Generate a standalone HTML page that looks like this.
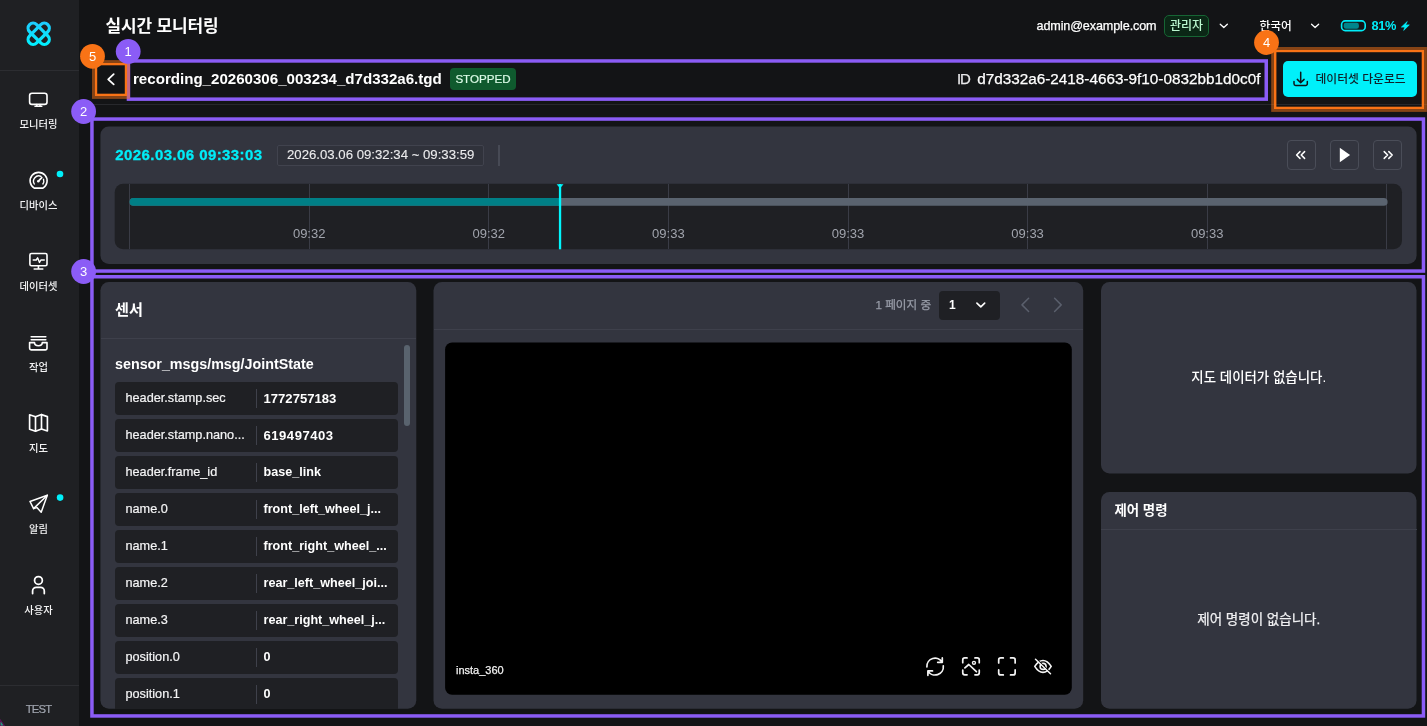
<!DOCTYPE html>
<html lang="ko">
<head>
<meta charset="utf-8">
<title>실시간 모니터링</title>
<style>
*{box-sizing:border-box;margin:0;padding:0}
html,body{width:1427px;height:726px;overflow:hidden;background:#131416}
body{position:relative;font-family:"Liberation Sans","Noto Sans CJK KR",sans-serif;color:#fff;-webkit-font-smoothing:antialiased}
.a{position:absolute}
.t{position:absolute;white-space:nowrap;line-height:20px;height:20px;-webkit-text-stroke:.25px}
.b{font-weight:700;-webkit-text-stroke:0}
svg{position:absolute;overflow:visible}
/* sidebar */
#side{left:0;top:0;width:79px;height:726px;background:#1f2023}
.sl{position:absolute;left:0;width:77px;text-align:center;font-size:10.3px;font-weight:500;line-height:14px;height:14px;margin-top:1.1px;color:#f2f2f3;white-space:nowrap}
.hr{position:absolute;height:1px;background:#3e404b}
.row{position:absolute;left:115px;width:283px;height:33px;background:#1f2024;border-radius:4px}
.row .k{position:absolute;left:10.5px;top:0;height:33px;line-height:33px;font-size:12.7px;color:#f4f4f5;white-space:nowrap;-webkit-text-stroke:.2px}
.row .v{position:absolute;left:148.5px;top:0;height:33px;line-height:33px;font-size:12.6px;font-weight:700;color:#fff;white-space:nowrap}
.row .n{font-size:13.1px}
.row i{position:absolute;left:141px;top:7px;width:1px;height:19px;background:#3f414b}
.tick{position:absolute;top:184px;width:1px;height:65px;background:#3a3c46}
.tl{position:absolute;top:224px;width:60px;margin-left:-30px;text-align:center;font-size:13px;line-height:20px;color:#a1a4ad}
.pbtn{position:absolute;top:140px;width:29px;height:30px;border:1px solid #4a4d58;border-radius:4px}
</style>
</head>
<body>
<div id="wrap" style="position:absolute;left:0;top:0;width:1427px;height:726px;will-change:transform">

<!-- ============ SIDEBAR ============ -->
<div id="side" class="a">
  <div class="a" style="left:0;top:70px;width:79px;height:1px;background:#2c2d31"></div>
  <div class="a" style="left:0;top:685px;width:79px;height:1px;background:#2c2d31"></div>
  <div class="sl" style="top:116.5px">모니터링</div>
  <div class="sl" style="top:197.5px">디바이스</div>
  <div class="sl" style="top:278.5px">데이터셋</div>
  <div class="sl" style="top:359.5px">작업</div>
  <div class="sl" style="top:440.5px">지도</div>
  <div class="sl" style="top:521.5px">알림</div>
  <div class="sl" style="top:602.5px">사용자</div>
  <div class="sl" style="top:701.2px;color:#a0a5af;font-size:11.3px;letter-spacing:-.9px;font-weight:400;-webkit-text-stroke:.2px">TEST</div>
</div>

<!-- ============ HEADER ============ -->
<div class="t b" id="title" style="left:105.5px;top:16.5px;font-size:17px;letter-spacing:-.15px">실시간 모니터링</div>
<div class="t" id="email" style="left:1036.5px;top:16px;font-size:12.6px;letter-spacing:-.12px">admin@example.com</div>
<div class="a" id="role" style="left:1164px;top:15px;width:45px;height:22px;border:1px solid #166534;border-radius:5px;background:#0b2716;color:#bbf7d0;font-size:12px;font-weight:500;line-height:20px;text-align:center">관리자</div>
<div class="t" id="lang" style="left:1259.5px;top:15.8px;font-size:11.7px;font-weight:500;-webkit-text-stroke:0">한국어</div>
<div class="t b" id="pct" style="left:1371.5px;top:16px;font-size:12.8px;letter-spacing:-.4px;color:#00ecf7">81%</div>
<div class="a" style="left:79px;top:104px;width:1348px;height:1px;background:#27282c"></div>

<!-- title row -->
<div class="t b" id="rec" style="left:133px;top:69px;font-size:15.1px">recording_20260306_003234_d7d332a6.tgd</div>
<div class="a" id="stopped" style="left:450px;top:68px;width:66px;height:22px;border-radius:4px;background:#0f5a2e;color:#dcfce7;font-size:11.6px;line-height:22px;text-align:center;-webkit-text-stroke:.2px">STOPPED</div>
<div class="t" id="idl" style="left:957px;top:69px;font-size:15px;letter-spacing:-1.2px;color:#e8e8ea">ID</div>
<div class="t" id="uuid" style="left:977.2px;top:69px;font-size:15.3px">d7d332a6-2418-4663-9f10-0832bb1d0c0f</div>
<div class="a" id="dl" style="left:1283px;top:60.5px;width:134px;height:36.5px;border-radius:5px;background:#00f0fa"></div>
<div class="t" id="dlt" style="left:1315.5px;top:69px;-webkit-text-stroke:0;font-size:11.8px;color:#10202a;font-weight:500">데이터셋 다운로드</div>

<!-- ============ CARD BACKGROUNDS ============ -->
<svg class="a" style="left:0;top:0" width="1427" height="726" viewBox="0 0 1427 726">
  <rect x="100.4" y="126.4" width="1316.2" height="137.6" rx="8.5" fill="#33353f"/>
  <rect x="100.4" y="281.9" width="315.9" height="426.8" rx="8.5" fill="#33353f"/>
  <rect x="433.5" y="281.9" width="649.7" height="426.8" rx="8.5" fill="#33353f"/>
  <rect x="1101" y="281.9" width="315.5" height="191.5" rx="8.5" fill="#33353f"/>
  <rect x="1101" y="491.9" width="315.5" height="216.8" rx="8.5" fill="#33353f"/>
  <rect x="114.7" y="183.8" width="1287.3" height="65.5" rx="8.5" fill="#1f2024"/>
  <rect x="445.1" y="342.5" width="626.7" height="352.2" rx="7" fill="#000"/>
</svg>

<!-- ============ TIMELINE CARD ============ -->
<div class="t b" id="cur" style="left:115.3px;top:145px;-webkit-text-stroke:.3px;font-size:15px;letter-spacing:.42px;color:#00ecf7">2026.03.06 09:33:03</div>
<div class="a" style="left:277px;top:144.5px;width:207px;height:21.5px;border:1px solid #41434e;border-radius:2px;background:#30323b"></div>
<div class="t" id="range" style="left:287px;top:144.6px;font-size:13.2px;-webkit-text-stroke:.1px;color:#ececee">2026.03.06 09:32:34 ~ 09:33:59</div>
<div class="a" style="left:498px;top:144.5px;width:2px;height:21.5px;background:#474a55"></div>
<div class="pbtn" style="left:1287px"></div>
<div class="pbtn" style="left:1330px"></div>
<div class="pbtn" style="left:1373px"></div>
<div class="tick" style="left:129px"></div>
<div class="tick" style="left:308.7px"></div>
<div class="tick" style="left:488.3px"></div>
<div class="tick" style="left:667.9px"></div>
<div class="tick" style="left:847.5px"></div>
<div class="tick" style="left:1027.1px"></div>
<div class="tick" style="left:1206.7px"></div>
<div class="tick" style="left:1386.3px"></div>
<svg class="a" style="left:0;top:0" width="1427" height="726" viewBox="0 0 1427 726">
  <rect x="129.6" y="198.1" width="1258" height="7.6" rx="3.8" fill="#5a636f"/>
  <path d="M560 198.100H133.400a3.800 3.800 0 0 0 0 7.600H560z" fill="#007f86"/>
  <rect x="558.9" y="184" width="2.3" height="65.3" fill="#00f6fc"/>
  <path d="M556.600 184.200h6.900l-3.450 4z" fill="#00f6fc"/>
</svg>
<div class="tl" style="left:309.2px">09:32</div>
<div class="tl" style="left:488.8px">09:32</div>
<div class="tl" style="left:668.4px">09:33</div>
<div class="tl" style="left:848px">09:33</div>
<div class="tl" style="left:1027.6px">09:33</div>
<div class="tl" style="left:1207.2px">09:33</div>

<!-- ============ SENSOR CARD ============ -->
<div class="t b" id="sens" style="left:115px;top:299.6px;font-size:15.2px">센서</div>
<div class="hr" style="left:100.5px;top:338px;width:315.5px"></div>
<div class="t b" id="jst" style="left:115px;top:354px;font-size:14.3px">sensor_msgs/msg/JointState</div>
<div class="a" style="left:404px;top:345px;width:6px;height:81px;border-radius:3px;background:#59636e"></div>
<div class="row" style="top:382px"><span class="k">header.stamp.sec</span><i></i><span class="v n">1772757183</span></div>
<div class="row" style="top:419px"><span class="k">header.stamp.nano...</span><i></i><span class="v n" style="letter-spacing:.5px">619497403</span></div>
<div class="row" style="top:456px"><span class="k">header.frame_id</span><i></i><span class="v">base_link</span></div>
<div class="row" style="top:493px"><span class="k">name.0</span><i></i><span class="v">front_left_wheel_j...</span></div>
<div class="row" style="top:530px"><span class="k">name.1</span><i></i><span class="v">front_right_wheel_...</span></div>
<div class="row" style="top:567px"><span class="k">name.2</span><i></i><span class="v">rear_left_wheel_joi...</span></div>
<div class="row" style="top:604px"><span class="k">name.3</span><i></i><span class="v">rear_right_wheel_j...</span></div>
<div class="row" style="top:641px"><span class="k">position.0</span><i></i><span class="v">0</span></div>
<div class="row" style="top:678px;height:30.7px;border-radius:4px 4px 0 0"><span class="k">position.1</span><i></i><span class="v">0</span></div>

<!-- ============ VIDEO CARD ============ -->
<div class="hr" style="left:433.5px;top:328.5px;width:649.5px"></div>
<div class="t" id="pg" style="left:875.5px;top:294.8px;font-size:11.6px;color:#989ca8">1 페이지 중</div>
<div class="a" style="left:939px;top:290.6px;width:61px;height:29px;border-radius:4px;background:#1f2024"></div>
<div class="t b" id="pg1" style="left:949px;top:294.8px;font-size:12px">1</div>
<div class="t" id="insta" style="left:456px;top:659.6px;font-size:11px;color:#f0f0f0">insta_360</div>

<!-- ============ MAP CARD ============ -->
<div class="t" id="mapt" style="left:1101px;width:315.5px;text-align:center;top:367.7px;font-size:13.45px;font-weight:500;-webkit-text-stroke:0">지도 데이터가 없습니다.</div>

<!-- ============ CONTROL CARD ============ -->
<div class="t b" id="ctlh" style="left:1114.5px;top:500.5px;font-size:13.4px">제어 명령</div>
<div class="hr" style="left:1101px;top:529px;width:315.5px"></div>
<div class="t" id="ctlt" style="left:1101px;width:315.5px;text-align:center;top:609.6px;font-size:13.5px;color:#f0f0f2">제어 명령이 없습니다.</div>


<!-- ============ ICONS (single overlay svg, page coordinates) ============ -->
<svg class="a" style="left:0;top:0" width="1427" height="726" viewBox="0 0 1427 726" fill="none" stroke-linecap="round" stroke-linejoin="round">
  <defs>
    <linearGradient id="lga" gradientUnits="userSpaceOnUse" x1="-8.5" y1="-8.5" x2="8.5" y2="8.5">
      <stop offset="0" stop-color="#1fcbff"/><stop offset="1" stop-color="#00f2ff"/>
    </linearGradient>
    <linearGradient id="lgb" gradientUnits="userSpaceOnUse" x1="8.5" y1="-8.5" x2="-8.5" y2="8.5">
      <stop offset="0" stop-color="#1fcbff"/><stop offset="1" stop-color="#00f2ff"/>
    </linearGradient>
  </defs>
  <!-- logo -->
  <g transform="translate(38.7 33.8)" stroke-width="3.2">
    <rect x="-12.9" y="-5" width="25.8" height="10" rx="5" transform="rotate(45)" stroke="url(#lga)"/>
    <rect x="-12.9" y="-5" width="25.8" height="10" rx="5" transform="rotate(-45)" stroke="url(#lgb)"/>
  </g>
  <path d="M0 719.500L4.500 726H0z" fill="#1f9e80" stroke="#5a1050" stroke-width="1.200"/>
  <circle cx="60" cy="174" r="3.300" fill="#00f0fa"/>
  <circle cx="60.100" cy="497.600" r="3.300" fill="#00f0fa"/>
  <!-- sidebar: monitor -->
  <g stroke="#fff" stroke-width="1.6">
    <rect x="29.6" y="93.2" width="17.4" height="11.2" rx="2.4"/>
    <path d="M35 106.300h6.800M36.800 104.500v1.600M40 104.500v1.600"/>
  </g>
  <!-- sidebar: dashboard -->
  <g stroke="#fff" stroke-width="1.6">
    <path d="M34.2 188.1A8.5 8.5 0 1 1 43 188.1z"/>
    <path d="M34.3 184a5.3 5.3 0 0 1 6.7-7.6M43.500 179.3a5.3 5.3 0 0 1-.6 4.700" stroke-width="1.4"/>
    <path d="M38.4 181.2l3.4-3.6" stroke-width="1.7"/>
  </g>
  <circle cx="38.3" cy="181.3" r="1.2" fill="#fff"/>
  <!-- sidebar: dataset -->
  <g stroke="#fff" stroke-width="1.6">
    <rect x="29.9" y="253.5" width="17.1" height="12.3" rx="1.6"/>
    <path d="M38.45 266v2.9M34.2 269h8.6"/>
    <path d="M33.2 260h3l1.4-2.2 1.9 4.6 1.4-2.4h3.4" stroke-width="1.4"/>
  </g>
  <!-- sidebar: jobs -->
  <g stroke="#fff" stroke-width="1.6">
    <path d="M31.2 336.8h14.6M31.2 339.7h14.6"/>
    <path d="M29.6 342.6h4.9c0 1.9 1.6 3.2 3.9 3.2s3.9-1.3 3.9-3.2h4.7v5.7a1.6 1.6 0 0 1-1.6 1.6H31.200a1.600 1.600 0 0 1-1.600-1.600z"/>
  </g>
  <!-- sidebar: map -->
  <g stroke="#fff" stroke-width="1.65">
    <path d="M29.600 414.800l5.900 2 6-2.200 5.900 2v14.400l-5.900-2-6 2.200-5.900-2z"/>
    <path d="M35.500 416.800v14.400M41.500 414.600v14.400"/>
  </g>
  <!-- sidebar: send -->
  <g stroke="#fff" stroke-width="1.5">
    <path d="M47.300 495.300L30 501.500l3.600 7.100 3.300-1 4.300 4.600z"/>
    <path d="M33.600 508.600l13.700-13.300"/>
  </g>
  <!-- sidebar: user -->
  <g stroke="#fff" stroke-width="1.6">
    <circle cx="38.450" cy="580.400" r="3.900" stroke-width="1.750"/>
    <path d="M32.600 593.500v-2.400a3.700 3.700 0 0 1 3.700-3.700h4.300a3.700 3.700 0 0 1 3.700 3.700v2.400" stroke-width="1.750"/>
  </g>

  <!-- header chevrons -->
  <g stroke="#fff" stroke-width="1.3">
    <path d="M1220.250 24.150l3.550 3.300 3.550-3.300"/>
    <path d="M1311.550 24.150l3.550 3.300 3.550-3.300"/>
  </g>
  <!-- battery -->
  <rect x="1341.600" y="20.900" width="23.600" height="9.700" rx="3.600" stroke="#00ecf7" stroke-width="1.600"/>
  <rect x="1343.700" y="22.700" width="15.200" height="6.100" rx="2.200" fill="#00858c"/>
  <path d="M1407 21.800l-5.600 5.300h3.500l-1.200 3.300 5.600-5.500h-3.500z" fill="#00ecf7" stroke="#00ecf7" stroke-width=".7" stroke-linejoin="round"/>

  <!-- back chevron -->
  <path d="M113.700 74.200l-5.500 5.100 5.500 5.100" stroke="#fff" stroke-width="1.800"/>
  <!-- download icon -->
  <g stroke="#0d1418" stroke-width="1.5">
    <path d="M1294 81.600v2.200a1.600 1.600 0 0 0 1.600 1.600h10.100a1.600 1.600 0 0 0 1.600-1.600v-2.200"/>
    <path d="M1300.700 72.200v10.300M1297.300 79.400l3.400 3.300 3.400-3.300"/>
  </g>

  <!-- player buttons -->
  <g stroke="#fff" stroke-width="1.500">
    <path d="M1300 151.650l-3.400 3.350 3.400 3.350M1304.600 151.650l-3.400 3.350 3.400 3.350"/>
    <path d="M1384.200 151.650l3.400 3.350-3.400 3.350M1388.800 151.650l3.400 3.350-3.400 3.350"/>
  </g>
  <path d="M1339.800 147.700v14.600l10.300-7.300z" fill="#fff"/>

  <!-- pager -->
  <path d="M976.900 303.100l3.900 3.800 3.900-3.800" stroke="#fff" stroke-width="1.600"/>
  <g stroke="#5a5f6c" stroke-width="1.500">
    <path d="M1028.600 298.300l-6.600 6.600 6.600 6.600"/>
    <path d="M1054.600 298.300l6.600 6.600-6.600 6.600"/>
  </g>

  <!-- video icons -->
  <g stroke="#f4f4f4" stroke-width="1.7">
    <!-- refresh -->
    <path d="M926.900 666.900A8.200 8.200 0 0 1 942.200 662.300M942.300 657.900V662.300H937.700"/>
    <path d="M943.300 665.900A8.200 8.200 0 0 1 928 670.800M927.900 675.300V670.900H932.500"/>
  </g>
  <g stroke="#f4f4f4" stroke-width="1.7">
    <!-- photo scan -->
    <path d="M962.75 662.65V659.95a2 2 0 0 1 2-2H967.05M974.95 657.95H977.25a2 2 0 0 1 2 2V662.65M979.25 670.1500000000001V672.85a2 2 0 0 1-2 2H974.95M967.05 674.85H964.75a2 2 0 0 1-2-2V670.1500000000001"/>
    <path d="M964.900 667.900l3.900-3.400 7.600 7.100" stroke-width="1.700"/>
    <circle cx="973.950" cy="662.850" r="1.500" stroke-width="1.400"/>
    <!-- fullscreen -->
    <path d="M998.7 662.95V659.95a2 2 0 0 1 2-2H1003.3000000000001M1010.55 657.95H1013.15a2 2 0 0 1 2 2V662.95M1015.15 669.9V672.9a2 2 0 0 1-2 2H1010.55M1003.3000000000001 674.9H1000.7a2 2 0 0 1-2-2V669.9"/>
    <!-- eye off -->
    <path d="M1034.750 666.400C1037.500 662 1040 660.450 1043 660.450S1048.500 662 1051.200 666.400C1048.500 670.800 1046 672.400 1043 672.400S1037.500 670.800 1034.750 666.400z" stroke-width="1.600"/>
    <circle cx="1043.100" cy="666.400" r="3" stroke-width="1.600"/>
    <path d="M1036.400 658.800l14.700 14.200" stroke="#000" stroke-width="1.100"/>
    <path d="M1035.500 659.200l15 14.500" stroke-width="1.500"/>
  </g>
</svg>

<!-- ============ ANNOTATIONS ============ -->
<svg class="a" style="left:0;top:0" width="1427" height="726" viewBox="0 0 1427 726" fill="none">
  <g stroke="#8b5cf6" stroke-width="3.5">
    <rect x="128.45" y="60.95" width="1137.8" height="38.2"/>
    <rect x="91.95" y="119.05" width="1331.5" height="152"/>
    <rect x="91.95" y="276.75" width="1331.5" height="439.2"/>
  </g>
  <g stroke="#f97316" stroke-opacity=".5" stroke-width="2.8">
    <rect x="93.4" y="61.5" width="35.2" height="36"/>
    <rect x="1272.6" y="48.4" width="152.9" height="62.1"/>
  </g>
  <g stroke="#f97316" stroke-width="2.4">
    <rect x="96" y="64.1" width="30" height="30.8"/>
    <rect x="1275.2" y="51" width="147.7" height="56.9"/>
  </g>
  <circle cx="92.5" cy="56.3" r="12.4" fill="#f97316"/>
  <circle cx="128.2" cy="51.4" r="12.4" fill="#8b5cf6"/>
  <circle cx="1266.5" cy="42.5" r="12.4" fill="#f97316"/>
  <circle cx="83.6" cy="111.5" r="12.4" fill="#8b5cf6"/>
  <circle cx="83.6" cy="271.5" r="12.4" fill="#8b5cf6"/>
  <g fill="#fff" font-family="Liberation Sans, sans-serif" font-size="13" text-anchor="middle">
    <text x="92.5" y="60.9">5</text>
    <text x="128.2" y="56">1</text>
    <text x="1266.5" y="47.1">4</text>
    <text x="83.6" y="116.1">2</text>
    <text x="83.6" y="276.1">3</text>
  </g>
</svg>

</div>
</body>
</html>
